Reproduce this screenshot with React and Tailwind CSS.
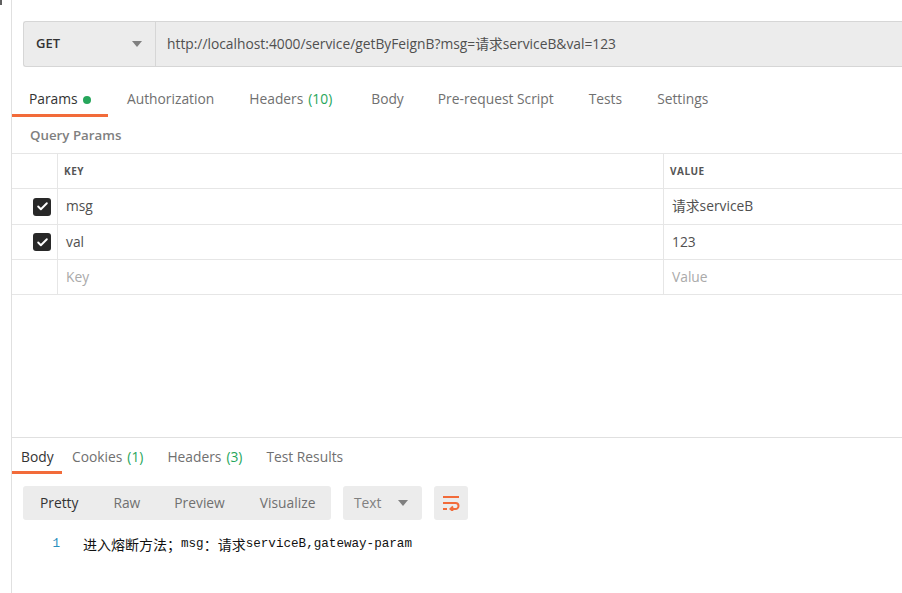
import { Check } from 'lucide-react'

function Caret({ className }) {
    return (
        <svg width="10" height="6" viewBox="0 0 10 6" className={className}>
            <path d="M0 0 L10 0 L5 6 Z" fill="#808080" />
        </svg>
    )
}

function WrapIcon() {
    return (
        <svg width="18" height="16" viewBox="0 0 18 16" fill="none" stroke="#f26b3a" strokeWidth="2">
            <path d="M1 2 H17" />
            <path d="M1 8 H13.5 a3 3 0 0 1 0 6 H9" />
            <path d="M11 11.5 L8.5 14 L11 16" />
            <path d="M1 14 H5" />
        </svg>
    )
}

function CheckBox() {
    return (
        <div className="w-[18px] h-[18px] rounded-[3px] bg-[#282828] flex items-center justify-center">
            <Check size={13} strokeWidth={3.5} color="#ffffff" />
        </div>
    )
}

const reqTabs = [
    { label: 'Authorization', ml: 'ml-[19px]' },
    { label: 'Headers', count: '(10)', ml: 'ml-[35px]' },
    { label: 'Body', ml: 'ml-[39px]' },
    { label: 'Pre-request Script', ml: 'ml-[34px]' },
    { label: 'Tests', ml: 'ml-[35px]' },
    { label: 'Settings', ml: 'ml-[35px]' },
]

const rows = [
    { key: 'msg', value: '请求serviceB', checked: true, h: 'h-[36px]' },
    { key: 'val', value: '123', checked: true, h: 'h-[35px]' },
    { key: 'Key', value: 'Value', checked: false, h: 'h-[35px]' },
]

export default function App() {
    return (
        <div className="w-[902px] h-[593px] bg-white flex overflow-hidden font-['Open_Sans','Noto_Sans_CJK_SC',sans-serif] text-[#505050]">

            {/* 왼쪽 여백 */}
            <div className="w-[11px] shrink-0">
                <div className="w-[2px] h-[5px] bg-[#606060]" />
            </div>

            {/* 메인 패널 */}
            <div className="flex-1 flex flex-col border-l border-[#e0e0e0]">

                {/* URL 바 */}
                <div className="mt-[21px] ml-[11px] h-[46px] flex bg-[#ececec] border border-r-0 border-[#d6d6d6] rounded-l-[3px]">
                    <div className="w-[132px] flex items-center justify-between pl-[12px] pr-[13px] border-r border-[#d6d6d6]">
                        <span className="text-[13px] font-semibold text-[#333]">GET</span>
                        <Caret />
                    </div>
                    <div className="flex items-center pl-[11px] text-[13.8px] text-[#505050]">
                        http://localhost:4000/service/getByFeignB?msg=请求serviceB&amp;val=123
                    </div>
                </div>

                {/* 요청 탭 */}
                <div className="mt-[16px] h-[34px] flex items-stretch text-[13.8px] text-[#707070]">
                    <div className="w-[96px] pl-[17px] pt-[2px] flex items-center border-b-[3px] border-[#f26b3a] text-[#333]">
                        Params
                        <span className="ml-[5px] w-[8px] h-[8px] rounded-full bg-[#26a65b]" />
                    </div>
                    {reqTabs.map((t) => (
                        <div key={t.label} className={`${t.ml} flex items-center pt-[2px] pb-[3px]`}>
                            {t.label}
                            {t.count && <span className="ml-[5px] text-[#26a65b]">{t.count}</span>}
                        </div>
                    ))}
                </div>

                {/* 쿼리 파라미터 */}
                <div className="h-[36px] pl-[18px] pt-[1px] flex items-center text-[13.3px] font-semibold text-[#808080]">
                    Query Params
                </div>

                <div className="border-t border-[#e6e6e6]">
                    <div className="h-[35px] flex border-b border-[#e6e6e6] text-[10px] font-bold tracking-[0.5px] text-[#555]">
                        <div className="w-[46px] border-r border-[#e6e6e6]" />
                        <div className="w-[606px] pl-[6px] flex items-center border-r border-[#e6e6e6]">KEY</div>
                        <div className="flex-1 pl-[6px] flex items-center">VALUE</div>
                    </div>
                    {rows.map((r) => (
                        <div key={r.key} className={`${r.h} flex border-b border-[#e6e6e6] text-[13.8px]`}>
                            <div className="w-[46px] flex items-center justify-center pl-[18px] pr-[3px] border-r border-[#e6e6e6]">
                                {r.checked && <CheckBox />}
                            </div>
                            <div className={`w-[606px] pl-[8px] flex items-center border-r border-[#e6e6e6] ${r.checked ? 'text-[#505050]' : 'text-[#aaa]'}`}>
                                {r.key}
                            </div>
                            <div className={`flex-1 pl-[8px] flex items-center ${r.checked ? 'text-[#505050]' : 'text-[#aaa]'}`}>
                                {r.value}
                            </div>
                        </div>
                    ))}
                </div>

                <div className="flex-1" />

                {/* 응답 영역 */}
                <div className="h-[156px] border-t border-[#e0e0e0] flex flex-col">
                    <div className="h-[36px] flex items-stretch text-[13.8px] text-[#707070]">
                        <div className="w-[50px] pl-[9px] pt-[5px] flex items-center border-b-[3px] border-[#f26b3a] text-[#333]">Body</div>
                        <div className="ml-[10px] flex items-center pt-[5px] pb-[3px]">
                            Cookies<span className="ml-[5px] text-[#26a65b]">(1)</span>
                        </div>
                        <div className="ml-[24px] flex items-center pt-[5px] pb-[3px]">
                            Headers<span className="ml-[5px] text-[#26a65b]">(3)</span>
                        </div>
                        <div className="ml-[24px] flex items-center pt-[5px] pb-[3px]">Test Results</div>
                    </div>

                    <div className="mt-[12px] ml-[11px] flex gap-[12px] h-[34px]">
                        <div className="w-[308px] flex items-center bg-[#ececec] rounded-[3px] text-[13.8px] text-[#707070]">
                            <span className="ml-[17px] text-[#333]">Pretty</span>
                            <span className="ml-[35px]">Raw</span>
                            <span className="ml-[34px]">Preview</span>
                            <span className="ml-[35px]">Visualize</span>
                        </div>
                        <div className="w-[79px] flex items-center justify-between pl-[11px] pr-[14px] bg-[#ececec] rounded-[3px] text-[13.8px] text-[#808080]">
                            Text
                            <Caret />
                        </div>
                        <div className="w-[34px] flex items-center justify-center bg-[#ececec] rounded-[3px]">
                            <WrapIcon />
                        </div>
                    </div>

                    <div className="mt-[14px] flex items-center h-[20px] text-[#111]">
                        <span className="w-[48px] text-right font-['Liberation_Mono',monospace] text-[12.6px] text-[#2a8fbd]">1</span>
                        <span className="ml-[23px] flex items-center">
                            <span className="font-['Noto_Sans_CJK_SC',sans-serif] text-[14px]">进入熔断方法；</span>
                            <span className="font-['Liberation_Mono',monospace] text-[12.6px]">msg</span>
                            <span className="font-['Noto_Sans_CJK_SC',sans-serif] text-[14px]">：请求</span>
                            <span className="font-['Liberation_Mono',monospace] text-[12.6px]">serviceB,gateway-param</span>
                        </span>
                    </div>
                </div>
            </div>
        </div>
    )
}
